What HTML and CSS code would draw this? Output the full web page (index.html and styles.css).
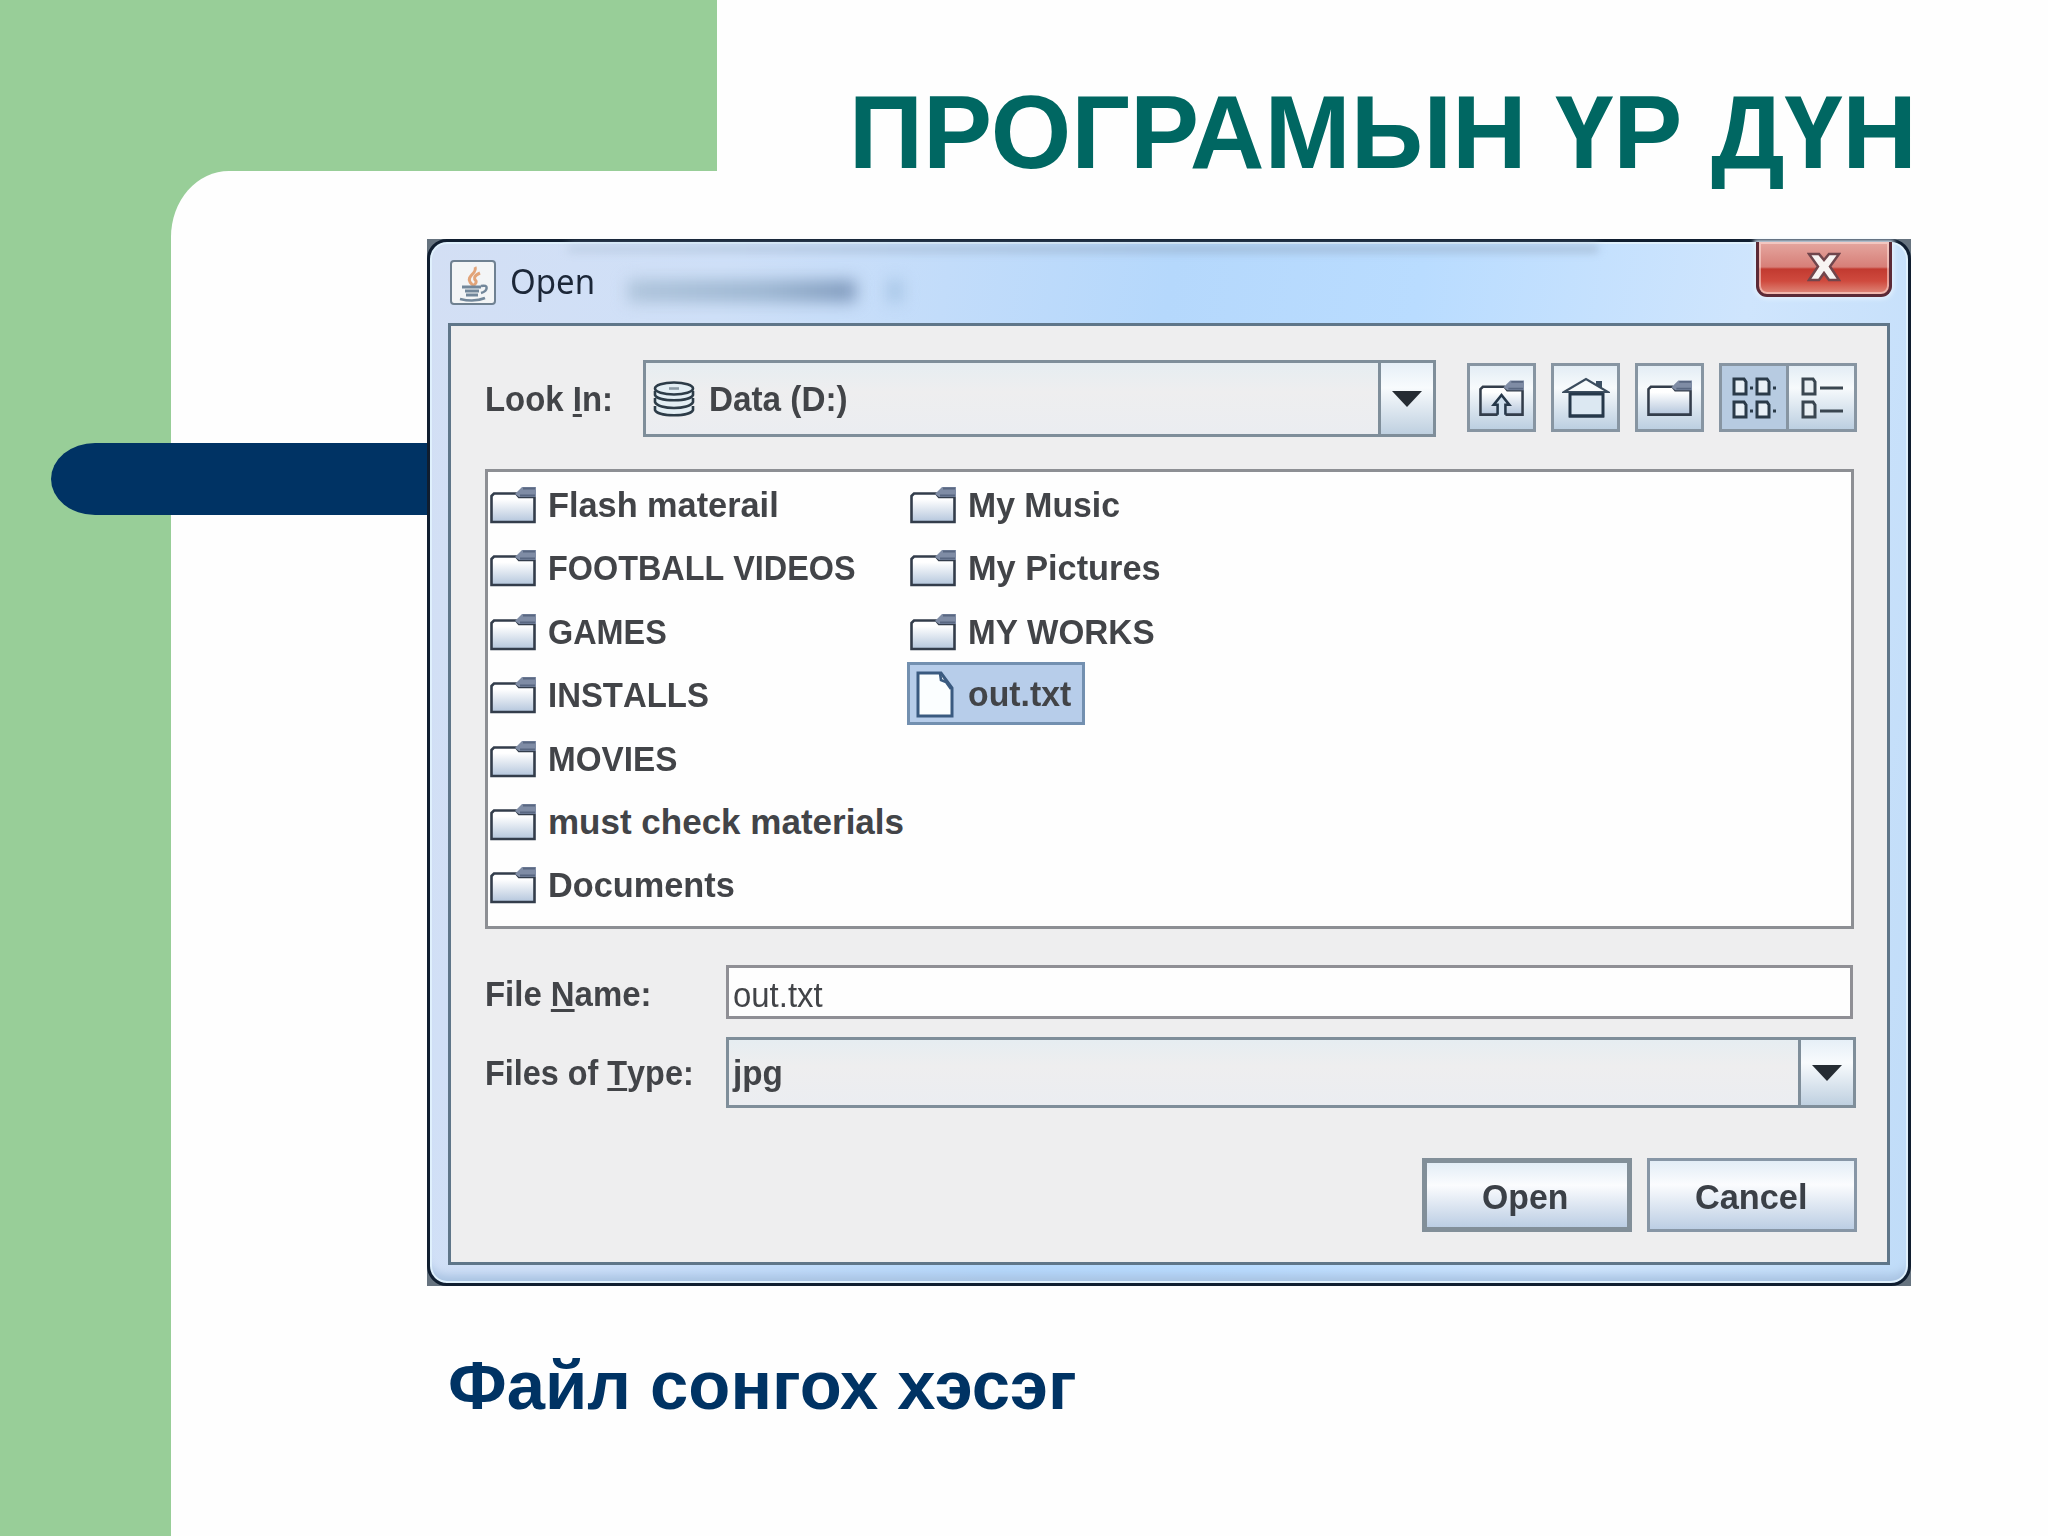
FILE: index.html
```html
<!DOCTYPE html>
<html lang="mn">
<head>
  <meta charset="UTF-8">
  <meta name="viewport" content="width=device-width, initial-scale=1.0">
  <title>ПРОГРАМЫН ҮР ДҮН</title>
  <link rel="stylesheet" href="styles.css">
</head>
<body>
  <!-- shared icons -->
  <svg width="0" height="0" class="defs">
    <defs>
      <linearGradient id="steel" x1="0" y1="0" x2="0" y2="1">
        <stop offset="0.2" stop-color="#ffffff"/>
        <stop offset="1" stop-color="#b4c6dc"/>
      </linearGradient>
      <symbol id="folder" viewBox="0 0 47 38">
        <path d="M1.500 10 L4 7.500 H26 L29 11 H44.500 V36 H1.500 Z" fill="url(#steel)" stroke="#333d4b" stroke-width="2.600"/>
        <path d="M25 8 L32 1 H46 V11 H29 Z" fill="#7f8ca5"/>
        <path d="M33 2.500 H45 M30 9.500 H45" stroke="#596781" stroke-width="1.800"/>
      </symbol>
      <symbol id="file" viewBox="0 0 38 47">
        <path d="M2 2 H25 L36 17 V45 H2 Z" fill="#fbfeff" stroke="#3a5a80" stroke-width="3"/>
        <path d="M24 2 L25 9 L30 11 L35 18" fill="none" stroke="#3a5a80" stroke-width="2.600"/>
      </symbol>
    </defs>
  </svg>

  <div class="slide">
    <header class="header">
      <h1 class="title">ПРОГРАМЫН ҮР ДҮН</h1>
    </header>
    <div class="accent"></div>
    <main class="content">
      <div class="backdrop">
        <div class="dialog">
          <div class="titlebar">
            <span class="java-icon">
              <svg width="40" height="40" viewBox="0 0 40 40" fill="none">
                <path d="M22 4 C25 10 13 13 17 19 C18 21 20 21 19 23 M27 10 C20 13 21 16 23 18 C24 20 21 22 20 23" stroke="#e2a478" stroke-width="3"/>
                <path d="M9 24 H28 M12 28 H26 M13 32 H25" stroke="#72879a" stroke-width="2.800"/>
                <path d="M28 23 C36 21 35 28 28 30" stroke="#72879a" stroke-width="2.500"/>
                <path d="M7 36 C15 38 25 38 32 35" stroke="#72879a" stroke-width="2.500"/>
              </svg>
            </span>
            <span class="titlebar-text">Open</span>
            <span class="ghost"></span>
            <span class="ghost ghost-small"></span>
            <span class="ghost-top"></span>
            <button class="close" type="button">
              <svg width="34" height="30" viewBox="0 0 34 30">
                <path d="M2 2 H12 L17 8 L22 2 H32 L23 14.500 L32 28 H22 L17 21 L12 28 H2 L11 14.500 Z" fill="#f8f4f2" stroke="#71464c" stroke-width="2.500"/>
              </svg>
            </button>
          </div>

          <div class="client">
            <div class="toolbar">
              <label class="label look-label"><span class="t94">Look <u>I</u>n:</span></label>
              <div class="combo look-combo">
                <div class="combo-value">
                  <svg class="disk" width="42" height="36" viewBox="0 0 42 36" fill="#e3eef4" stroke="#2d3c48" stroke-width="2.600">
                    <path d="M2 25 V29 C5 36 37 36 40 29 V25"/>
                    <path d="M2 17 V21 C5 29 37 29 40 21 V17"/>
                    <path d="M2 10 V14 C5 21 37 21 40 14 V10"/>
                    <ellipse cx="21" cy="7.500" rx="19" ry="6"/>
                    <path d="M16 7.500 H26" stroke="#8b9aa5"/>
                  </svg>
                  <span class="t95">Data (D:)</span>
                </div>
                <div class="combo-arrow"><i class="arrow"></i></div>
              </div>
              <div class="tools">
                <button class="tool" type="button">
                  <svg width="46" height="38" viewBox="0 0 47 38">
                    <use href="#folder"/>
                    <path d="M23 15 L32 25 H27 V38 H19 V25 H14 Z" fill="#cfdfee"/>
                    <path d="M19 36 V26 H15 L23 16 L31 26 H27 V36" fill="none" stroke="#26384a" stroke-width="2.600"/>
                  </svg>
                </button>
                <button class="tool" type="button">
                  <svg width="48" height="42" viewBox="0 0 48 42">
                    <rect x="8" y="16" width="33" height="23" fill="#dce8f2" stroke="#26384a" stroke-width="3"/>
                    <path d="M34 4 H40 V13 H34 Z" fill="#3c5064"/>
                    <path d="M2 15 L24 2 L46 15 Z" fill="#f8fbfc" stroke="#3c4d5e" stroke-width="2.200"/>
                    <path d="M8 17 H41 M7 39 H42" stroke="#26384a" stroke-width="3"/>
                  </svg>
                </button>
                <button class="tool" type="button">
                  <svg width="46" height="38"><use href="#folder"/></svg>
                </button>
                <div class="toggle">
                  <button class="tool tool-on" type="button">
                    <svg width="46" height="44" viewBox="0 0 46 44" fill="#e9f0f6" stroke="#2a3a48" stroke-width="3">
                      <path d="M3 3 H13 L15 6 V18 H3 Z M26 3 H36 L38 6 V18 H26 Z M3 26 H13 L15 29 V41 H3 Z M26 26 H36 L38 29 V41 H26 Z"/>
                      <path d="M19 12 H22 M42 12 H45 M19 35 H22 M42 35 H45"/>
                    </svg>
                  </button>
                  <button class="tool" type="button">
                    <svg width="44" height="44" viewBox="0 0 44 44" fill="#e9eff3" stroke="#3a4650" stroke-width="3">
                      <path d="M3 3 H13 L15 6 V18 H3 Z M3 26 H13 L15 29 V41 H3 Z"/>
                      <path d="M20 12 H43 M20 35 H43"/>
                    </svg>
                  </button>
                </div>
              </div>
            </div>

            <div class="list">
              <div class="item"><svg class="icon"><use href="#folder"/></svg><span class="t98">Flash materail</span></div>
              <div class="item"><svg class="icon"><use href="#folder"/></svg><span class="t93">FOOTBALL VIDEOS</span></div>
              <div class="item"><svg class="icon"><use href="#folder"/></svg><span class="t93">GAMES</span></div>
              <div class="item"><svg class="icon"><use href="#folder"/></svg><span class="t94">INSTALLS</span></div>
              <div class="item"><svg class="icon"><use href="#folder"/></svg><span class="t95">MOVIES</span></div>
              <div class="item"><svg class="icon"><use href="#folder"/></svg><span>must check materials</span></div>
              <div class="item"><svg class="icon"><use href="#folder"/></svg><span class="t98">Documents</span></div>
              <div class="item"><svg class="icon"><use href="#folder"/></svg><span class="t96">My Music</span></div>
              <div class="item"><svg class="icon"><use href="#folder"/></svg><span class="t98">My Pictures</span></div>
              <div class="item"><svg class="icon"><use href="#folder"/></svg><span class="t95">MY WORKS</span></div>
              <div class="item selected"><svg class="icon icon-file"><use href="#file"/></svg><span class="t96">out.txt</span></div>
            </div>

            <div class="row name-row">
              <label class="label"><span class="t94">File <u>N</u>ame:</span></label>
              <div class="field"><span class="t94">out.txt</span></div>
            </div>
            <div class="row type-row">
              <label class="label"><span class="t93">Files of <u>T</u>ype:</span></label>
              <div class="combo type-combo">
                <div class="combo-value"><span class="t95">jpg</span></div>
                <div class="combo-arrow"><i class="arrow"></i></div>
              </div>
            </div>

            <div class="actions">
              <button class="btn btn-default" type="button"><span class="t96">Open</span></button>
              <button class="btn" type="button"><span class="t98">Cancel</span></button>
            </div>
          </div>
        </div>
      </div>
      <p class="caption">Файл сонгох хэсэг</p>
    </main>
  </div>
</body>
</html>
```
FILE: styles.css
```css
* {
  box-sizing: border-box;
}

body {
  margin: 0;
  background: #fefefe;
  font-family: "Liberation Sans", Arial, sans-serif;
  overflow: hidden;
}

.defs {
  position: absolute;
}

.slide {
  position: relative;
  width: 2048px;
  height: 1536px;
  background: #98ce98;
  overflow: hidden;
}

.header {
  height: 171px;
  margin-left: 717px;
  padding: 71px 131px 0 0;
  background: #fefefe;
}

.title {
  margin: 0;
  font-size: 103.500px;
  line-height: 123px;
  font-weight: bold;
  text-align: right;
  white-space: nowrap;
  color: #006762;
}

.content {
  height: 1365px;
  margin-left: 171px;
  padding: 68px 0 0 256px;
  background: #fefefe;
  border-top-left-radius: 58px 66px;
}

/* bar that runs under the dialog */
.accent {
  position: absolute;
  left: 51px;
  top: 443px;
  width: 500px;
  height: 72px;
  background: #003364;
  border-radius: 44px 0 0 44px / 36px 0 0 36px;
}

.backdrop {
  position: relative;
  width: 1484px;
  height: 1047px;
  background: #66737f;
}

.dialog {
  height: 100%;
  padding: 0 18px 18px;
  border: 3px solid #101e30;
  border-radius: 20px;
  background: linear-gradient(100deg, #d3dff4 0, #cfe0f8 18%, #b5d8fc 45%, #b9dcff 60%, #cfe5fd 80%, #c0dcf8 100%);
  box-shadow: inset 0 0 0 2px #dff0fc, inset 0 -14px 10px -6px #a9c3e2;
}

.titlebar {
  position: relative;
  display: flex;
  align-items: flex-start;
  height: 81px;
}

.java-icon {
  width: 46px;
  height: 45px;
  margin: 18px 0 0 2px;
  padding: 1px;
  border: 2px solid #6f8191;
  border-radius: 4px;
  background: #f3f5f6;
}

.java-icon svg {
  display: block;
}

.titlebar-text {
  margin: 16px 0 0 14px;
  font: 34px/46px "Noto Sans", "Open Sans", sans-serif;
  color: #1c2738;
  transform: scaleX(0.97);
  transform-origin: left;
}

/* blurred window text behind the glass */
.ghost {
  position: absolute;
  left: 180px;
  top: 38px;
  width: 228px;
  height: 22px;
  background: linear-gradient(90deg, #adc3da, #9ab4cf 60%, #7f99bc);
  filter: blur(8px);
}

.ghost-small {
  left: 440px;
  width: 14px;
  background: #a3c2e2;
}

.ghost-top {
  position: absolute;
  left: 120px;
  top: 4px;
  width: 1030px;
  height: 6px;
  background: linear-gradient(90deg, #bccde3, #9ab3d0 60%, #a3b9d3);
  filter: blur(4px);
}

.close {
  display: flex;
  align-items: center;
  justify-content: center;
  width: 136px;
  height: 55px;
  margin: 0 -2px 0 auto;
  padding: 0 0 2px;
  border: 3px solid #5c2a36;
  border-top: 0;
  border-radius: 0 0 11px 11px;
  background: linear-gradient(#e5a7a0 0, #d77f78 48%, #c23a30 52%, #cf4a3e 75%, #e08a7c 100%);
  box-shadow: inset 0 0 0 2px rgba(255, 225, 220, 0.55), 0 0 4px 2px #e4f1fd;
}

.client {
  height: 942px;
  padding: 34px 30px 0 34px;
  border: 3px solid #5f7689;
  background: #eeeeef;
  font-size: 35px;
  font-weight: bold;
  font-kerning: none;
  color: #424448;
}

.toolbar {
  display: flex;
  align-items: flex-start;
}

.label {
  flex: none;
  width: 241px;
}

.look-label {
  width: 158px;
  line-height: 78px;
}

.label u {
  text-decoration-thickness: 3px;
  text-underline-offset: 3px;
}

/* squeezed text, as the dialog font runs narrower than Arial */
.t93, .t94, .t95, .t96, .t98 {
  display: inline-block;
  transform-origin: left;
  white-space: nowrap;
}

.t93 { transform: scaleX(0.925); }
.t94 { transform: scaleX(0.94); }
.t95 { transform: scaleX(0.95); }
.t96 { transform: scaleX(0.965); }
.t98 { transform: scaleX(0.98); }

.combo {
  display: flex;
  border: 3px solid #7f8e9a;
  background: linear-gradient(#e6edf1, #eeeeef 40%, #ebedf1);
}

.look-combo {
  width: 795px;
  height: 77px;
}

.combo-value {
  display: flex;
  flex: 1;
  align-items: center;
}

.disk {
  margin: 0 14px 0 7px;
}

.combo-arrow {
  display: flex;
  align-items: center;
  justify-content: center;
  width: 55px;
  border-left: 3px solid #7f8e9a;
  background: linear-gradient(#e6eff7, #f8fbfd 35%, #bfd0e0);
}

.arrow {
  border: 15px solid transparent;
  border-top: 16px solid #252c33;
  border-bottom: 0;
}

.tools {
  display: flex;
  gap: 15px;
  margin: 3px 0 0 31px;
}

.tool {
  display: flex;
  align-items: center;
  justify-content: center;
  width: 69px;
  height: 69px;
  padding: 0;
  border: 3px solid #8795a2;
  background: linear-gradient(#e3edf5, #f7fafc 35%, #bccfe1);
}

.toggle {
  display: flex;
}

.toggle .tool + .tool {
  width: 68px;
  border-left: 0;
}

.toggle .tool-on {
  width: 70px;
  background: #b7cbe1;
}

.list {
  display: grid;
  grid-template-rows: repeat(7, 63.4px);
  grid-template-columns: 420px auto;
  grid-auto-flow: column;
  justify-content: start;
  justify-items: start;
  width: 1369px;
  height: 460px;
  margin-top: 31px;
  border: 3px solid #8d8f94;
  background: #fefefe;
}

.item {
  display: flex;
  align-items: center;
  height: 63px;
  padding: 3px 12px 0 2px;
  white-space: nowrap;
}

.icon {
  flex: none;
  width: 47px;
  height: 38px;
  margin-right: 11px;
}

.selected {
  margin-left: -1px;
  padding: 1px 7px 0 6px;
  border: 3px solid #7390b0;
  background: #b7cdea;
}

.icon-file {
  width: 38px;
  height: 47px;
  margin-right: 14px;
}

.row {
  display: flex;
  align-items: center;
}

.name-row {
  margin-top: 36px;
}

.name-row .label {
  padding-top: 4px;
}

.field {
  display: flex;
  align-items: center;
  width: 1127px;
  height: 54px;
  padding: 5px 0 0 4px;
  border: 3px solid #8f8f95;
  background: #fefefe;
  font-weight: normal;
}

.type-row {
  margin-top: 18px;
}

.type-combo {
  width: 1130px;
  height: 71px;
}

.type-combo .combo-value {
  padding-left: 4px;
}

.actions {
  display: flex;
  justify-content: flex-end;
  gap: 15px;
  margin-top: 50px;
}

.btn {
  width: 210px;
  height: 74px;
  padding: 3px 0 0;
  border: 3px solid #8796a6;
  background: linear-gradient(#e3edf6, #fbfcfe 35%, #bccee4);
  font: inherit;
  color: #3b4047;
}

.btn-default {
  border: 5px solid #828f99;
}

.caption {
  margin: 64px 0 0 21px;
  font-size: 68.800px;
  line-height: 72px;
  font-weight: bold;
  color: #003364;
}
```
